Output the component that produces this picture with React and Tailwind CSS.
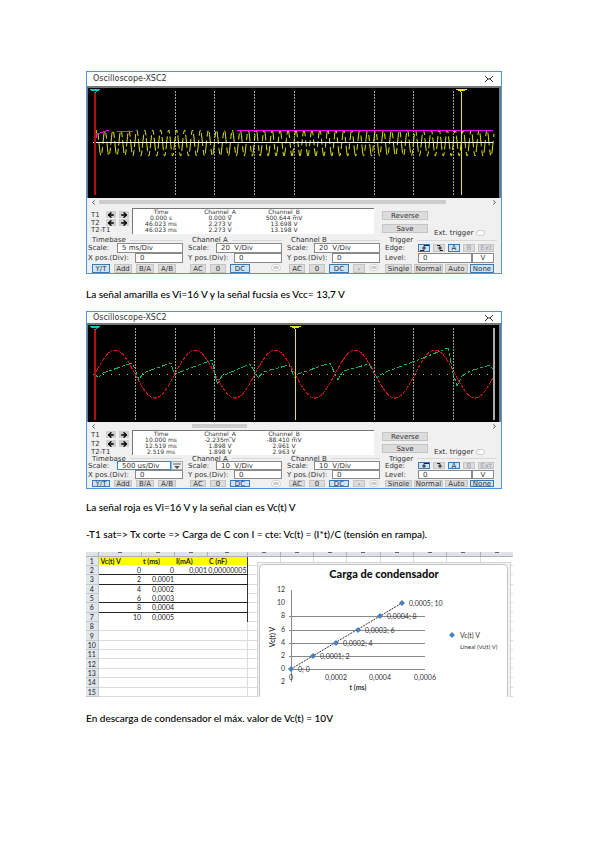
import { useId } from "react";
import { ArrowLeft, ArrowRight, ChevronLeft, ChevronRight } from "lucide-react";
import { clsx } from "clsx";

const firstScope = {
  title: "Oscilloscope-XSC2",
  readings: [
    ["0.000 s", "0.000 V", "500.644 mV"],
    ["46.023 ms", "2.273 V", "13.698 V"],
    ["46.023 ms", "2.273 V", "13.198 V"],
  ],
  timeScale: "5 ms/Div",
  scaleA: "20  V/Div",
  scaleB: "20  V/Div",
};

const secondScope = {
  title: "Oscilloscope-XSC2",
  readings: [
    ["10.000 ms", "-2.235m V", "-88.410 mV"],
    ["12.519 ms", "1.898 V", "2.961 V"],
    ["2.519 ms", "1.898 V", "2.963 V"],
  ],
  timeScale: "500 us/Div",
  scaleA: "10  V/Div",
  scaleB: "10  V/Div",
};

const sine = (from, to, mid, amplitude, period) => {
  const points = [];
  for (let x = from; x <= to; x += 0.5) {
    const y = mid - amplitude * Math.sin(((x - from) * 2 * Math.PI) / period);
    points.push(`${x},${y.toFixed(1)}`);
  }
  return points.join(" ");
};

const GridLines = ({ columns, top, bottom }) => (
  <g stroke="#a3a3a3" strokeDasharray="2 1">
    {columns.map((x) => (
      <line key={x} x1={x} x2={x} y1={top} y2={bottom} />
    ))}
  </g>
);

const Cursor = ({ x, bottom, color, head, width = 1 }) => (
  <g>
    <line x1={x} x2={x} y1="2" y2={bottom} stroke={color} strokeWidth={width} />
    <path d={`M${x - 6} 1h12l-3 2h-1l-2 2l-2-2h-1z`} fill={head} />
    <path d={`M${x - 1} 3.500h2`} stroke="#000" />
  </g>
);

const FastTrace = () => (
  <svg viewBox="0 0 411 110" className="block w-full bg-black" shapeRendering="crispEdges">
    <GridLines columns={[87.5, 126.5, 166.5, 206.5, 286.5, 325.5, 365.5]} top={3} bottom={107} />
    <polyline
      points={sine(7, 406, 55, 13, 7.96)}
      fill="none"
      stroke="#e6e600"
      strokeDasharray="13 4 6 3"
      shapeRendering="auto"
    />
    <path d="M5 54.500H405" stroke="#fff" />
    <path d="M7 53l2-7l12-4M29 43.500h16" fill="none" stroke="#f0f" />
    <rect x="149" y="42" width="256" height="1" fill="#f0f" />
    <Cursor x={7} bottom={107} color="#b01010" head="#00c8d0" width={2} />
    <Cursor x={373.5} bottom={107} color="#e6e600" head="#e6e600" />
  </svg>
);

const SlowTrace = () => (
  <svg viewBox="0 0 411 97" className="block w-full bg-black" shapeRendering="crispEdges">
    <GridLines columns={[47.5, 87.5, 126.5, 166.5, 286.5, 325.5, 365.5]} top={3} bottom={95} />
    <path d="M7 49.500H400" stroke="#bbb" strokeDasharray="1 7" />
    <polyline
      points={sine(7, 406, 49, 24, 80)}
      fill="none"
      stroke="#c01414"
      strokeDasharray="4 1"
    />
    <polyline
      points="5,49 7,49 10,53 15,48 44,38 46,42 51,55 55,48 83,38 86,49 92,47 124,35 129,59 134,51 162,39 170,53 175,47 201,40 207,53 210,49 242,38 250,55 255,46 281,39 289,53 295,48 335,33 360,23 365,48 369,61 374,51 382,46 402,40 405,44"
      fill="none"
      stroke="#13b268"
      strokeDasharray="6 2 3 2"
    />
    <path d="M406 3V95" stroke="#aaa" strokeWidth="2" />
    <Cursor x={7} bottom={95} color="#b01010" head="#00c8d0" width={2} />
    <Cursor x={207.5} bottom={95} color="#e6e600" head="#e6e600" />
  </svg>
);

const PanelButton = ({ children, active, muted, className }) => (
  <button
    type="button"
    className={clsx(
      "flex h-full items-center justify-center overflow-hidden border whitespace-nowrap",
      active ? "border-[#3c78b4] bg-[#cce4f7]" : "border-[#c4c4c4] bg-[#dcdcdc]",
      muted && "text-gray-400",
      className
    )}
  >
    {children}
  </button>
);

const Field = ({ label, value, inputClass, highlight, children }) => {
  const id = useId();
  return (
    <div className="flex min-h-0 items-center justify-between">
      <label htmlFor={id} className="whitespace-nowrap">
        {label}
      </label>
      <div className={clsx("flex h-full", inputClass)}>
        <input
          id={id}
          defaultValue={value}
          className={clsx(
            "h-full w-full min-w-0 border bg-white px-1 outline-none",
            highlight ? "border-[#2a8ad8]" : "border-[#8a8a8a]"
          )}
        />
        {children}
      </div>
    </div>
  );
};

const Group = ({ title, compact, children }) => (
  <fieldset
    className={clsx(
      "grid min-w-0 pr-1 pl-px",
      compact ? "grid-rows-[5px_9px_9px_8px]" : "grid-rows-[6px_10px_10px_10px]"
    )}
  >
    <div className="flex items-center gap-1 pl-1">
      <span className="whitespace-nowrap">{title}</span>
      <span className="h-px flex-1 bg-[#d8d8d8]" />
    </div>
    {children}
  </fieldset>
);

const Channel = ({ name, scale, compact, minus }) => (
  <Group title={`Channel ${name}`} compact={compact}>
    <Field label="Scale:" value={scale} inputClass="w-[66px]" />
    <Field label="Y pos.(Div):" value="0" inputClass="w-[48px]" />
    <div className="flex gap-1 pt-px pl-[2px]">
      <PanelButton className="w-4">AC</PanelButton>
      <PanelButton className="w-4">0</PanelButton>
      <PanelButton active className="w-5">DC</PanelButton>
      {minus && <PanelButton className="w-3">-</PanelButton>}
      <span className="mr-px ml-auto h-[7px] w-[10px] rounded-full border border-[#ccc] bg-white p-px">
        <span className="block h-full rounded-full bg-[#ccc]" />
      </span>
    </div>
  </Group>
);

const TimeArrows = () => (
  <span className="flex gap-[3px]">
    <button type="button" aria-label="Back" className="flex h-[7px] w-[10px] items-center justify-center bg-[#d0d0d0] text-black">
      <ArrowLeft size={8} strokeWidth={4} />
    </button>
    <button type="button" aria-label="Forward" className="flex h-[7px] w-[10px] items-center justify-center bg-[#d0d0d0] text-black">
      <ArrowRight size={8} strokeWidth={4} />
    </button>
  </span>
);

const Oscilloscope = ({ data, compact, thumb, children }) => (
  <section className="mr-[11px] border border-[#4a97dc] bg-[#f0f0f0] font-['DejaVu_Sans',sans-serif] text-[7px] leading-[6px] text-[#333]">
    <header
      className={clsx(
        "flex items-center justify-between bg-white pr-2 pl-[6px] text-[8px]",
        compact ? "h-[11px]" : "h-[14px]"
      )}
    >
      <h2>{data.title}</h2>
      <button type="button" aria-label="Close">
        <svg viewBox="0 0 8 6" className="h-[6px] w-2" fill="none" stroke="#333">
          <path d="M0 0l3 3l-3 3M8 0l-3 3l3 3M2 3h4" />
        </svg>
      </button>
    </header>

    <div className="border-t-2 border-r-2 border-l border-[#777]">{children}</div>

    {/* Scroll bar */}
    <div className="flex h-2 items-center px-[3px]">
      <ChevronLeft size={7} strokeWidth={3} />
      <div className="h-1 flex-1">
        <div className={clsx("h-full bg-[#cdcdcd]", thumb)} />
      </div>
      <ChevronRight size={7} strokeWidth={3} />
    </div>

    {/* Cursor readings */}
    <div className={clsx("flex", compact ? "h-[26px]" : "h-[31px] pt-px")}>
      <div className={clsx("flex w-[45px] flex-col justify-between pr-[3px] pl-1", compact ? "py-px" : "pt-1 pb-[4px]")}>
        <div className="flex items-center justify-between">T1 <TimeArrows /></div>
        <div className="flex items-center justify-between">T2 <TimeArrows /></div>
        <div>T2-T1</div>
      </div>
      <div className={clsx("w-[242px] border-t border-l border-[#777] bg-white px-[2px]", compact ? "mb-px" : "mt-px mb-[3px]")}>
        <table className="w-full table-fixed text-center text-[6px] leading-[6px]">
          <thead>
            <tr>
              <th className="w-[52px] p-0 font-normal">Time</th>
              <th className="w-[66px] p-0 font-normal">Channel_A</th>
              <th className="w-[62px] p-0 font-normal">Channel_B</th>
              <th className="p-0" />
            </tr>
          </thead>
          <tbody>
            {data.readings.map((row, i) => (
              <tr key={i}>
                {row.map((value, j) => (
                  <td key={j} className="p-0 whitespace-nowrap">{value}</td>
                ))}
                <td className="p-0" />
              </tr>
            ))}
          </tbody>
        </table>
      </div>
      <div className={clsx("flex flex-1 gap-[6px] pl-2", compact ? "pt-[2px]" : "pt-[4px]")}>
        <div className={clsx("flex w-[46px] flex-col", compact ? "gap-[3px]" : "gap-1")}>
          <PanelButton className="max-h-[9px]">Reverse</PanelButton>
          <PanelButton className="max-h-[9px]">Save</PanelButton>
        </div>
        <label className="flex items-center gap-[3px] self-end pb-px whitespace-nowrap">
          Ext. trigger
          <input type="radio" className="h-[6px] w-[9px] appearance-none rounded-full border border-[#ccc] bg-white" />
        </label>
      </div>
    </div>

    <div className={clsx("grid grid-cols-[100fr_99fr_98fr_117fr]", compact && "pb-px")}>
      <Group title="Timebase" compact={compact}>
        <Field
          label="Scale:"
          value={data.timeScale}
          highlight={compact}
          inputClass="w-[66px]"
        >
          {compact && (
            <button type="button" aria-label="Step" className="flex w-[14px] items-center justify-center border border-[#aaa]">
              <svg viewBox="0 0 8 6" className="h-[6px] w-2">
                <path d="M0 1h8" stroke="#555" />
                <path d="M1 3h6L4 6z" fill="#555" />
              </svg>
            </button>
          )}
        </Field>
        <Field label="X pos.(Div):" value="0" inputClass="w-[48px]" />
        <div className="flex gap-1 pt-px pl-1">
          <PanelButton active className="w-[18px]">Y/T</PanelButton>
          <PanelButton className="w-[18px]">Add</PanelButton>
          <PanelButton className="w-[18px]">B/A</PanelButton>
          <PanelButton className="w-[18px]">A/B</PanelButton>
        </div>
      </Group>
      <Channel name="A" scale={data.scaleA} compact={compact} />
      <Channel name="B" scale={data.scaleB} compact={compact} minus />
      <Group title="Trigger" compact={compact}>
        <div className="flex items-center">
          <span className="w-[33px]">Edge:</span>
          <div className="flex h-full gap-[3px] py-px">
            <PanelButton active className="w-3">
              <svg viewBox="0 0 9 6" className="h-[6px] w-[9px]" fill="none" stroke="#222">
                <path d="M0 5.500h4v-5h5M2 3h4" />
              </svg>
            </PanelButton>
            <PanelButton className="w-3">
              <svg viewBox="0 0 9 6" className="h-[6px] w-[9px]" fill="none" stroke="#222">
                <path d="M2 .5h3v5h3M3 3h4" />
              </svg>
            </PanelButton>
            <PanelButton active className="w-3">A</PanelButton>
            <PanelButton muted className="w-3">B</PanelButton>
            <PanelButton muted className="w-4">Ext</PanelButton>
          </div>
        </div>
        <div className="grid pr-[3px]">
          <Field label="Level:" value="0" inputClass="w-[76px]">
            <input
              aria-label="Unit"
              defaultValue="V"
              className="h-full w-[22px] border border-[#8a8a8a] bg-white text-center outline-none"
            />
          </Field>
        </div>
        <div className="flex gap-[2px] pt-px">
          <PanelButton className="w-[27px]">Single</PanelButton>
          <PanelButton className="w-[29px]">Normal</PanelButton>
          <PanelButton className="w-[23px]">Auto</PanelButton>
          <PanelButton active className="w-[24px]">None</PanelButton>
        </div>
      </Group>
    </div>
  </section>
);

const sheetRows = [
  ["Vc(t) V", "t (ms)", "I(mA)", "C (nF)"],
  ["0", "0", "0,001", "0,00000005"],
  ["2", "0,0001", "", ""],
  ["4", "0,0002", "", ""],
  ["6", "0,0003", "", ""],
  ["8", "0,0004", "", ""],
  ["10", "0,0005", "", ""],
];
const columnWidths = ["w-[12px]", "w-[43px]", "w-[33px]", "w-[33px]", "w-[40px]", "w-[33px]", "w-[33px]", "w-[33px]", "w-[34px]", "w-[33px]", "w-[33px]", "w-[34px]", "w-[33px]"];
const ruledRows = [1, 2, 4, 5];

const chartPoints = [
  [34, 107, "0; 0"],
  [56, 94, "0,0001; 2"],
  [79, 81, "0,0002; 4"],
  [101, 68, "0,0003; 6"],
  [123, 54, "0,0004; 8"],
  [145, 41, "0,0005; 10"],
];

const CondenserChart = () => (
  <svg viewBox="0 0 254 136" className="block w-full font-['Lato',sans-serif] text-[7px]" fill="#333">
    <rect x="0.500" y="0.500" width="253" height="150" fill="#f3f3f3" stroke="#d4d4d4" />
    <rect x="2.500" y="2.500" width="248" height="150" rx="4" fill="#fff" stroke="#c4c4c4" />
    <text x="127" y="16" textAnchor="middle" className="text-[11px] font-black" fill="#111">
      Carga de condensador
    </text>
    <g stroke="#888" shapeRendering="crispEdges">
      {[54, 68, 81, 94, 107].map((y) => (
        <line key={y} x1="32" x2="168" y1={y + 0.5} y2={y + 0.5} />
      ))}
      <path d="M34.500 28v92" />
    </g>
    {["12", "10", "8", "6", "4", "2", "0", "2"].map((label, i) => (
      <text key={i} x="28" y={30 + Math.round(i * 13.2)} textAnchor="end">{label}</text>
    ))}
    {["0", "0,0002", "0,0004", "0,0006"].map((label, i) => (
      <text key={label} x={34 + Math.round(i * 44.5)} y="118" textAnchor="middle">{label}</text>
    ))}
    <text x="101" y="128" textAnchor="middle" className="font-bold">t (ms)</text>
    <text x="18" y="75" textAnchor="middle" transform="rotate(-90 18 75)" className="font-bold">Vc(t) V</text>
    <path d="M34 107L145 41" stroke="#333" strokeDasharray="2 1" />
    {chartPoints.map(([x, y, label]) => (
      <g key={label}>
        <path d={`M${x} ${y - 3}l3 3l-3 3l-3-3z`} fill="#4a80bd" />
        <text x={x + 7} y={y + 3}>{label}</text>
      </g>
    ))}
    <path d="M195 70l3 3l-3 3l-3-3z" fill="#4a80bd" />
    <text x="203" y="76">Vc(t) V</text>
    <text x="203" y="87" className="text-[6px]">Lineal (Vc(t) V)</text>
  </svg>
);

const Spreadsheet = () => (
  <section className="relative overflow-hidden font-['Lato',sans-serif] text-[7px] leading-[8px] text-[#222]">
    <table className="h-[145px] w-full table-fixed border-collapse">
      <colgroup>
        {columnWidths.map((width, i) => (
          <col key={i} className={width} />
        ))}
      </colgroup>
      <thead>
        <tr className="h-1 bg-[#dfe3e8]">
          {columnWidths.map((_, i) => (
            <th key={i} className="border-r border-b border-[#a9b2bd] p-0 align-top">
              {i > 0 && <div className="mx-auto h-px w-1 bg-[#666]" />}
            </th>
          ))}
        </tr>
      </thead>
      <tbody>
        {Array.from({ length: 15 }, (_, row) => (
          <tr key={row}>
            <th scope="row" className="border-r border-b border-[#c0c8d2] bg-[#e1e6ec] p-0 text-center font-normal">
              {row + 1}
            </th>
            {columnWidths.slice(1).map((_, col) => (
              <td
                key={col}
                className={clsx(
                  "p-0 whitespace-nowrap",
                  row === 0 && col < 4 && "bg-[#ff0] pl-[2px] font-bold",
                  row > 0 && col < 4 && "text-right",
                  col >= 4 && "border-r border-b border-[#dcdcdc]",
                  col === 3 && (row < 7 ? "border-r border-r-[#333]" : "border-r border-r-[#dcdcdc]"),
                  col < 4 && (ruledRows.includes(row) ? "border-b border-b-[#222]" : row > 6 && "border-b border-b-[#dcdcdc]")
                )}
              >
                {sheetRows[row]?.[col]}
              </td>
            ))}
          </tr>
        ))}
      </tbody>
    </table>
    {/* Chart object floating over the cells */}
    <div className="absolute top-[10px] right-[2px] w-[254px]">
      <CondenserChart />
    </div>
  </section>
);

const Paragraph = ({ children, className }) => (
  <p className={clsx("text-[10px] leading-4 font-medium text-black", className)}>{children}</p>
);

export default function App() {
  return (
    <main className="min-h-screen bg-white px-[86px] pt-[71px] pb-16 font-['Lato',sans-serif]">
      <Oscilloscope data={firstScope} thumb="ml-[2px] w-[88%]">
        <FastTrace />
      </Oscilloscope>
      <Paragraph className="mt-3 mb-[9px]">
        La señal amarilla es Vi=16 V y la señal fucsia es Vcc= 13,7 V
      </Paragraph>
      <Oscilloscope data={secondScope} compact thumb="ml-[24%] w-[14%]">
        <SlowTrace />
      </Oscilloscope>
      <Paragraph className="mt-[10px]">La señal roja es Vi=16 V y la señal cian es Vc(t) V</Paragraph>
      <Paragraph className="mt-[11px] mb-[10px]">
        -T1 sat=&gt; Tx corte =&gt; Carga de C con I = cte: Vc(t) = (I*t)/C (tensión en rampa).
      </Paragraph>
      <Spreadsheet />
      <Paragraph className="mt-[13px]">
        En descarga de condensador el máx. valor de Vc(t) = 10V
      </Paragraph>
    </main>
  );
}
